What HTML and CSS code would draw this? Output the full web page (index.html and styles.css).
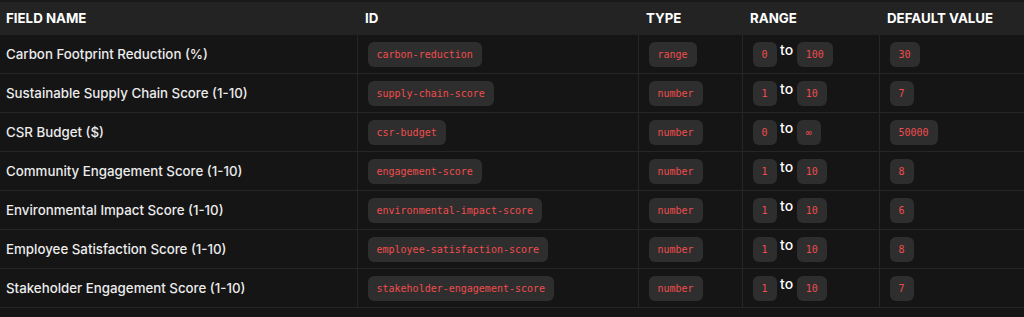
FILE: index.html
```html
<!DOCTYPE html>
<html lang="en">
<head>
<meta charset="utf-8">
<title>Fields</title>
<link rel="stylesheet" href="styles.css">
</head>
<body>
<div class="wrap">
<table class="fields">
  <colgroup>
    <col class="c-name"><col class="c-id"><col class="c-type"><col class="c-range"><col class="c-def">
  </colgroup>
  <thead>
    <tr><th>Field Name</th><th>ID</th><th>Type</th><th>Range</th><th>Default Value</th></tr>
  </thead>
  <tbody>
    <tr><td>Carbon Footprint Reduction (%)</td><td><code class="pill">carbon-reduction</code></td><td><code class="pill">range</code></td><td><code class="pill">0</code> <span class="to">to</span> <code class="pill">100</code></td><td><code class="pill">30</code></td></tr>
    <tr><td>Sustainable Supply Chain Score (1-10)</td><td><code class="pill">supply-chain-score</code></td><td><code class="pill">number</code></td><td><code class="pill">1</code> <span class="to">to</span> <code class="pill">10</code></td><td><code class="pill">7</code></td></tr>
    <tr><td>CSR Budget ($)</td><td><code class="pill">csr-budget</code></td><td><code class="pill">number</code></td><td><code class="pill">0</code> <span class="to">to</span> <code class="pill">∞</code></td><td><code class="pill">50000</code></td></tr>
    <tr><td>Community Engagement Score (1-10)</td><td><code class="pill">engagement-score</code></td><td><code class="pill">number</code></td><td><code class="pill">1</code> <span class="to">to</span> <code class="pill">10</code></td><td><code class="pill">8</code></td></tr>
    <tr><td>Environmental Impact Score (1-10)</td><td><code class="pill">environmental-impact-score</code></td><td><code class="pill">number</code></td><td><code class="pill">1</code> <span class="to">to</span> <code class="pill">10</code></td><td><code class="pill">6</code></td></tr>
    <tr><td>Employee Satisfaction Score (1-10)</td><td><code class="pill">employee-satisfaction-score</code></td><td><code class="pill">number</code></td><td><code class="pill">1</code> <span class="to">to</span> <code class="pill">10</code></td><td><code class="pill">8</code></td></tr>
    <tr><td>Stakeholder Engagement Score (1-10)</td><td><code class="pill">stakeholder-engagement-score</code></td><td><code class="pill">number</code></td><td><code class="pill">1</code> <span class="to">to</span> <code class="pill">10</code></td><td><code class="pill">7</code></td></tr>
  </tbody>
</table>
</div>
</body>
</html>
```
FILE: styles.css
```css
html, body {
  margin: 0;
  padding: 0;
  background: #151515;
}
body {
  font-family: Inter, "Noto Sans", sans-serif;
  color: #ececec;
}
.wrap {
  padding-top: 2px;
  background: #1a1a1a;
}
.fields {
  width: 1024px;
  border-collapse: collapse;
  table-layout: fixed;
  background: #151515;
}
.c-name { width: 357px; }
.c-id { width: 281px; }
.c-type { width: 104px; }
.c-range { width: 137px; }
.c-def { width: 145px; }
.fields th {
  background: #232323;
  color: #ffffff;
  font-size: 13.3px;
  font-weight: 700;
  text-transform: uppercase;
  text-align: left;
  height: 33px;
  padding: 0 8px;
  line-height: 17px;
}
.fields td {
  height: 38px;
  padding: 0 8px 0 10px;
  font-size: 13.3px;
  font-weight: 500;
  color: #ececec;
  border-bottom: 1px solid #262626;
  border-left: 1px solid #262626;
  white-space: nowrap;
}
.fields th:first-child,
.fields td:first-child {
  padding-left: 6px;
  border-left: none;
}
.pill {
  display: inline-block;
  background: #2e2e2e;
  color: #ef4d4d;
  font-family: "DejaVu Sans Mono", "Liberation Mono", monospace;
  font-size: 10px;
  line-height: 15px;
  padding: 5px 9px;
  border-radius: 6px;
  vertical-align: middle;
}
.to {
  color: #ffffff;
  font-size: 14px;
  vertical-align: 4px;
}
```
